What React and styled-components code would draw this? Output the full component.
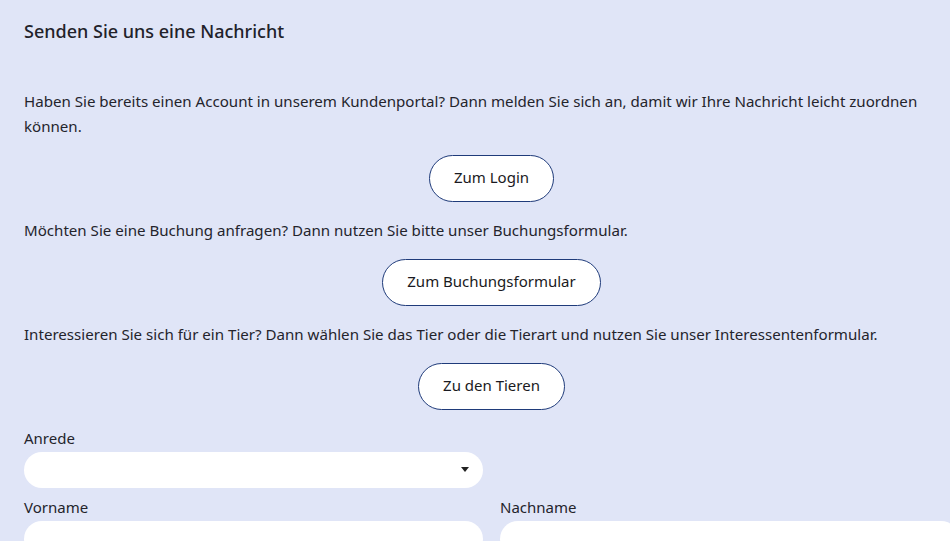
import React from "react";
import styled, { createGlobalStyle } from "styled-components";

const Global = createGlobalStyle`
  html, body { margin: 0; padding: 0; overflow: hidden; background: #e0e5f7; }
  body { font-family: "Noto Sans", "DejaVu Sans", sans-serif; color: #24242c; }
  * { box-sizing: border-box; }
`;

const Page = styled.div`
  width: 983px;
  padding: 19px 24px 24px;
  display: flex;
  flex-direction: column;
`;

const Title = styled.h2`
  margin: 0 0 46px;
  font-size: 18px;
  font-weight: 500;
  line-height: 24px;
  color: #22222a;
`;

const Intro = styled.div`
  display: flex;
  flex-direction: column;
  gap: 16px;
`;

const Text = styled.p`
  margin: 0;
  font-size: 15.1px;
  line-height: 25px;
`;

const ButtonRow = styled.div`
  display: flex;
  justify-content: center;
`;

const PillButton = styled.button`
  height: 47px;
  padding: 0 24px 4px;
  border: 1px solid #1f3b7a;
  border-radius: 24px;
  background: #fff;
  font-family: inherit;
  font-size: 15px;
  color: #1a1a22;
  cursor: pointer;
`;

const Form = styled.div`
  margin-top: 17px;
  display: grid;
  grid-template-columns: 459px 459px;
  column-gap: 17px;
  row-gap: 8px;
`;

const Field = styled.div`
  display: flex;
  flex-direction: column;
  gap: 3px;
`;

const Label = styled.label`
  font-size: 15px;
  line-height: 22px;
  color: #24242c;
`;

const SelectBox = styled.div`
  position: relative;
  height: 36px;
  border-radius: 18px;
  background: #fff;
`;

const Caret = styled.span`
  position: absolute;
  right: 14px;
  top: 15px;
  width: 0;
  height: 0;
  border-left: 4px solid transparent;
  border-right: 4px solid transparent;
  border-top: 5px solid #222;
`;

const Input = styled.div`
  height: 36px;
  border-radius: 18px;
  background: #fff;
`;

export default function App() {
  return (
    <>
      <Global />
      <Page>
        <Title>Senden Sie uns eine Nachricht</Title>
        <Intro>
          <Text>
            Haben Sie bereits einen Account in unserem Kundenportal? Dann melden Sie sich an, damit wir Ihre
            Nachricht leicht zuordnen können.
          </Text>
          <ButtonRow>
            <PillButton>Zum Login</PillButton>
          </ButtonRow>
          <Text>Möchten Sie eine Buchung anfragen? Dann nutzen Sie bitte unser Buchungsformular.</Text>
          <ButtonRow>
            <PillButton>Zum Buchungsformular</PillButton>
          </ButtonRow>
          <Text>
            Interessieren Sie sich für ein Tier? Dann wählen Sie das Tier oder die Tierart und nutzen Sie unser
            Interessentenformular.
          </Text>
          <ButtonRow>
            <PillButton>Zu den Tieren</PillButton>
          </ButtonRow>
        </Intro>
        <Form>
          <Field>
            <Label>Anrede</Label>
            <SelectBox>
              <Caret />
            </SelectBox>
          </Field>
          <div />
          <Field>
            <Label>Vorname</Label>
            <Input />
          </Field>
          <Field>
            <Label>Nachname</Label>
            <Input />
          </Field>
        </Form>
      </Page>
    </>
  );
}
